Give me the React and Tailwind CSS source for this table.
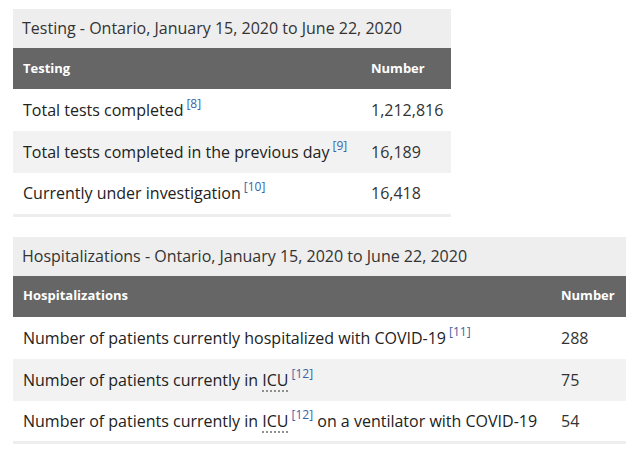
import React from "react";

const Ref = ({ n }) => (
  <sup className="text-[12px] text-[#3b63a6] ml-[3px] -top-[8px] relative align-baseline">[{n}]</sup>
);

const Abbr = ({ children }) => (
  <span className="underline decoration-dotted decoration-[#777] underline-offset-[5px]">{children}</span>
);

const testing = [
  { label: <>Total tests completed<Ref n={8} /></>, value: "1,212,816" },
  { label: <>Total tests completed in the previous day<Ref n={9} /></>, value: "16,189" },
  { label: <>Currently under investigation<Ref n={10} /></>, value: "16,418" },
];

const hospital = [
  { label: <>Number of patients currently hospitalized with COVID-19<Ref n={11} /></>, value: "288" },
  { label: <>Number of patients currently in <Abbr>ICU</Abbr><Ref n={12} /></>, value: "75" },
  {
    label: <>Number of patients currently in <Abbr>ICU</Abbr><Ref n={12} /> on a ventilator with COVID-19</>,
    value: "54",
  },
];

const DataTable = ({ caption, head, rows, width, numCol }) => (
  <table className={`${width} border-collapse border-b-[3px] border-[#eeeeee]`}>
    <caption className="bg-[#eeeeee] text-left text-[16px] text-[#333] h-[39px] pl-[9px] pt-[7px]">{caption}</caption>
    <thead>
      <tr className="bg-[#666666] text-white text-[13px] font-bold h-[41px]">
        <th className="text-left pl-[10px]">{head}</th>
        <th className={`text-left ${numCol}`}>Number</th>
      </tr>
    </thead>
    <tbody>
      {rows.map((r, idx) => (
        <tr key={idx} className={`h-[42px] text-[16px] text-[#222] ${idx % 2 === 1 ? "bg-[#f2f2f2]" : "bg-white"}`}>
          <td className="pl-[10px]">{r.label}</td>
          <td className="text-[#333]">{r.value}</td>
        </tr>
      ))}
    </tbody>
  </table>
);

const App = () => {
  return (
    <div className="w-[640px] h-[456px] bg-white pl-[13px] pt-[9px] font-['Open_Sans',sans-serif] overflow-hidden">
      <DataTable caption="Testing - Ontario, January 15, 2020 to June 22, 2020" head="Testing" rows={testing} width="w-[438px]" numCol="w-[80px]" />
      <div className="h-[20px]" />
      <DataTable
        caption="Hospitalizations - Ontario, January 15, 2020 to June 22, 2020"
        head="Hospitalizations"
        rows={hospital}
        width="w-[613px]"
        numCol="w-[65px]"
      />
    </div>
  );
};

export default App;
